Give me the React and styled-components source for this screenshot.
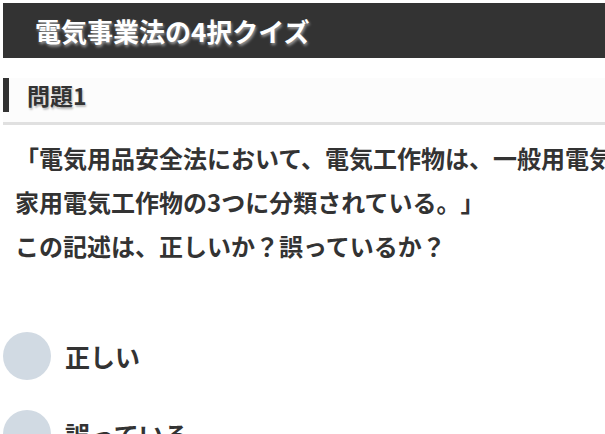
import styled, { createGlobalStyle } from "styled-components";

const GlobalStyle = createGlobalStyle`
  html, body {
    margin: 0;
    padding: 0;
    overflow: hidden;
    background: #fff;
  }
  body {
    font-family: "Noto Sans CJK JP", "Noto Sans", sans-serif;
    color: #333;
    text-spacing-trim: space-all;
  }
`;

const choices = ["正しい", "誤っている"];

const App = () => {
  return (
    <>
      <GlobalStyle />
      <StyledPage>
        <StyledTitleBar>電気事業法の4択クイズ</StyledTitleBar>
        <StyledHeading>
          <span>問題1</span>
        </StyledHeading>
        <StyledQuestion>
          「電気用品安全法において、電気工作物は、一般用電気工作物、事業用電気工作物、自家用電気工作物の3つに分類されている。」
          <br />
          この記述は、正しいか？誤っているか？
        </StyledQuestion>
        <StyledChoices>
          {choices.map((c) => (
            <StyledChoice key={c}>
              <i />
              {c}
            </StyledChoice>
          ))}
        </StyledChoices>
      </StyledPage>
    </>
  );
};

export default App;

//Styled components
const StyledPage = styled.div`
  width: 960px;
  padding: 3px;
`;

const StyledTitleBar = styled.h1`
  margin: 0;
  height: 55px;
  display: flex;
  align-items: center;
  padding-left: 32px;
  background: #333;
  color: #fff;
  font-size: 26px;
  font-weight: bold;
  text-shadow: 1px 2px 3px rgba(170, 170, 170, 0.9);
`;

const StyledHeading = styled.h2`
  margin: 20px 0 0;
  padding-bottom: 10px;
  background: #fcfcfc;
  border-bottom: 3px solid #e0e0e0;
  span {
    display: flex;
    align-items: center;
    height: 34px;
    padding-left: 18px;
    border-left: 6px solid #333;
    font-size: 23px;
    font-weight: bold;
    color: #333;
    text-shadow: 1px 2px 2px rgba(0, 0, 0, 0.25);
  }
`;

const StyledQuestion = styled.p`
  margin: 11px 0 0;
  padding-left: 12px;
  width: 945px;
  font-size: 24px;
  font-weight: bold;
  line-height: 44px;
  color: #333;
`;

const StyledChoices = styled.ul`
  list-style: none;
  margin: 64px 0 0;
  padding: 0;
  display: flex;
  flex-direction: column;
  gap: 30px;
`;

const StyledChoice = styled.li`
  display: flex;
  align-items: center;
  gap: 14px;
  font-size: 25px;
  font-weight: bold;
  color: #333;
  i {
    width: 48px;
    height: 48px;
    border-radius: 50%;
    background: #d1dae3;
    flex-shrink: 0;
  }
`;
